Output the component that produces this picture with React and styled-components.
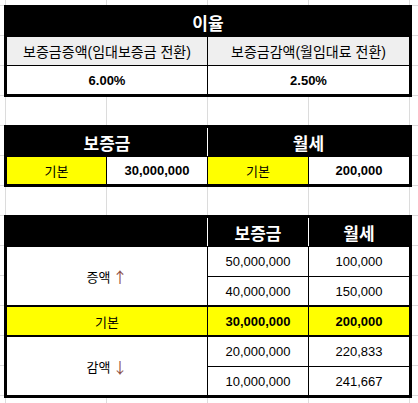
import React from "react";
import styled, { createGlobalStyle } from "styled-components";

const GlobalStyle = createGlobalStyle`
  html, body {
    margin: 0;
    padding: 0;
  }
  body {
    width: 418px;
    height: 403px;
    overflow: hidden;
    background-color: #fff;
    background-image:
      linear-gradient(to right, #dcdcdc 1px, transparent 1px),
      linear-gradient(to bottom, #dcdcdc 1px, transparent 1px);
    background-size: 101px 30px;
    background-position: 5px 5px;
    font-family: "Liberation Sans", "Noto Sans CJK KR", sans-serif;
  }
`;

const Sheet = styled.div`
  display: flex;
  flex-direction: column;
  align-items: flex-start;
  gap: 28px;
  padding: 5px 0 0 4px;
`;

const Table = styled.div`
  display: grid;
  grid-template-columns: 99px 100px 100px 100px;
  grid-template-rows: ${p => p.$rows};
  gap: 1px;
  border: 3px solid #000;
  background: #000;
`;

const TitleBar = styled.div`
  grid-column: 1 / -1;
  display: grid;
  grid-template-columns: ${p => p.$cols};
  gap: 1px;
  background: #fff;
`;

const TitleCell = styled.div`
  display: flex;
  align-items: center;
  justify-content: center;
  background: #000;
  color: #fff;
  font-size: 17px;
  font-weight: bold;
`;

const Cell = styled.div`
  grid-column: span ${p => p.$span || 1};
  grid-row: span ${p => p.$rowSpan || 1};
  display: flex;
  align-items: center;
  justify-content: center;
  background: ${p => p.$bg || "#fff"};
  color: #000;
  font-size: ${p => p.$size || 13}px;
  font-weight: ${p => (p.$bold ? "bold" : "normal")};
  white-space: nowrap;
`;

const BaseCell = styled(Cell)`
  background: #ffff00;
  border-top: 1px solid #000;
  border-bottom: 1px solid #000;
`;

const Arrow = styled.span`
  margin-left: 2px;
  font-family: "Noto Sans CJK KR", sans-serif;
  font-size: 15px;
  color: #8b4d42;
`;

const GRAY = "#efefef";
const YELLOW = "#ffff00";

export default function App() {
  return (
    <>
      <GlobalStyle />
      <Sheet>
        <Table $rows="28px 28px 28px">
          <TitleBar $cols="1fr">
            <TitleCell>이율</TitleCell>
          </TitleBar>
          <Cell $span={2} $bg={GRAY} $size={14}>보증금증액(임대보증금 전환)</Cell>
          <Cell $span={2} $bg={GRAY} $size={14}>보증금감액(월임대료 전환)</Cell>
          <Cell $span={2} $bold>6.00%</Cell>
          <Cell $span={2} $bold>2.50%</Cell>
        </Table>

        <Table $rows="28px 27px">
          <TitleBar $cols="200px 201px">
            <TitleCell>보증금</TitleCell>
            <TitleCell>월세</TitleCell>
          </TitleBar>
          <Cell $bg={YELLOW}>기본</Cell>
          <Cell $bold>30,000,000</Cell>
          <Cell $bg={YELLOW}>기본</Cell>
          <Cell $bold>200,000</Cell>
        </Table>

        <Table $rows="28px 29px 28px 30px 29px 28px">
          <TitleBar $cols="200px 100px 100px">
            <TitleCell />
            <TitleCell>보증금</TitleCell>
            <TitleCell>월세</TitleCell>
          </TitleBar>
          <Cell $span={2} $rowSpan={2}>
            증액<Arrow>↑</Arrow>
          </Cell>
          <Cell>50,000,000</Cell>
          <Cell>100,000</Cell>
          <Cell>40,000,000</Cell>
          <Cell>150,000</Cell>
          <BaseCell $span={2}>기본</BaseCell>
          <BaseCell $bold>30,000,000</BaseCell>
          <BaseCell $bold>200,000</BaseCell>
          <Cell $span={2} $rowSpan={2}>
            감액<Arrow>↓</Arrow>
          </Cell>
          <Cell>20,000,000</Cell>
          <Cell>220,833</Cell>
          <Cell>10,000,000</Cell>
          <Cell>241,667</Cell>
        </Table>
      </Sheet>
    </>
  );
}
